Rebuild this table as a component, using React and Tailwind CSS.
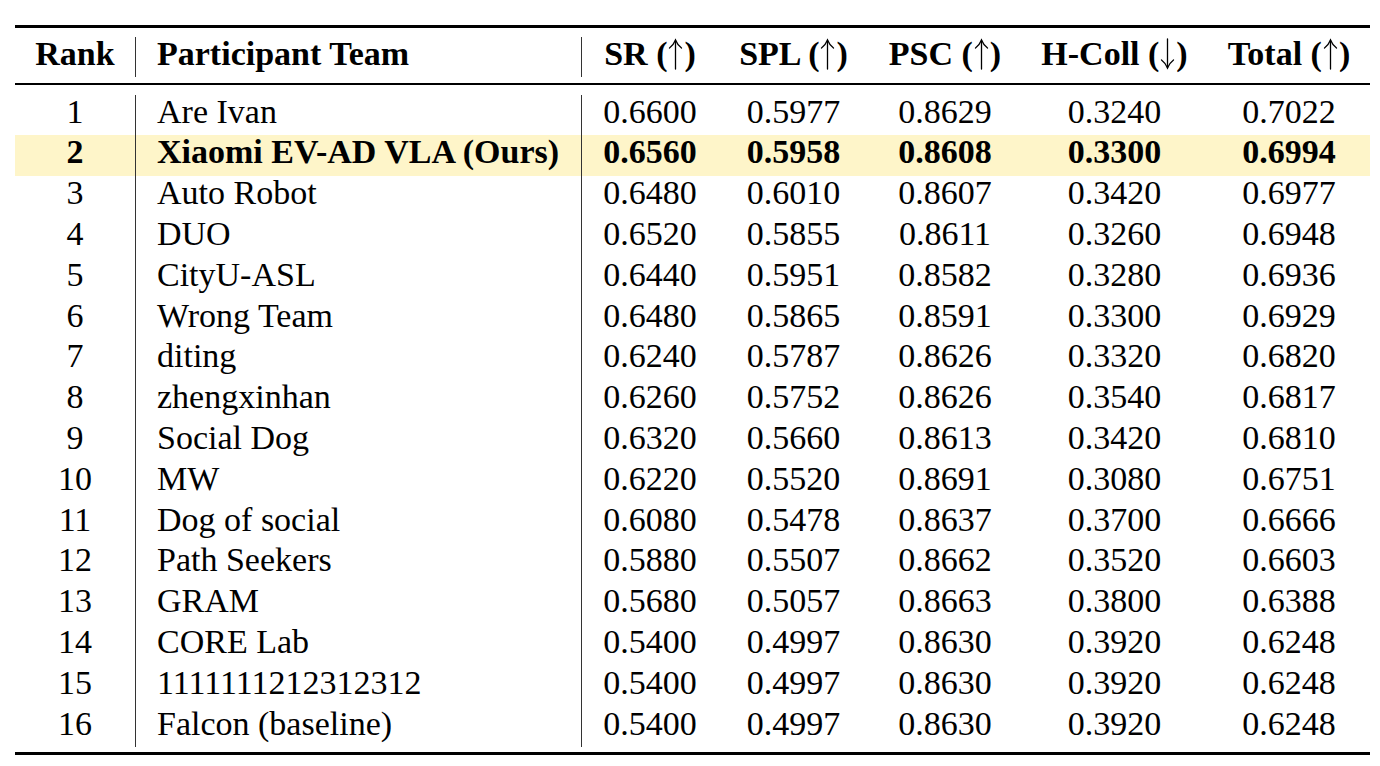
import React from 'react'

const ROWS = [
  ['1', 'Are Ivan', '0.6600', '0.5977', '0.8629', '0.3240', '0.7022'],
  ['2', 'Xiaomi EV-AD VLA (Ours)', '0.6560', '0.5958', '0.8608', '0.3300', '0.6994'],
  ['3', 'Auto Robot', '0.6480', '0.6010', '0.8607', '0.3420', '0.6977'],
  ['4', 'DUO', '0.6520', '0.5855', '0.8611', '0.3260', '0.6948'],
  ['5', 'CityU-ASL', '0.6440', '0.5951', '0.8582', '0.3280', '0.6936'],
  ['6', 'Wrong Team', '0.6480', '0.5865', '0.8591', '0.3300', '0.6929'],
  ['7', 'diting', '0.6240', '0.5787', '0.8626', '0.3320', '0.6820'],
  ['8', 'zhengxinhan', '0.6260', '0.5752', '0.8626', '0.3540', '0.6817'],
  ['9', 'Social Dog', '0.6320', '0.5660', '0.8613', '0.3420', '0.6810'],
  ['10', 'MW', '0.6220', '0.5520', '0.8691', '0.3080', '0.6751'],
  ['11', 'Dog of social', '0.6080', '0.5478', '0.8637', '0.3700', '0.6666'],
  ['12', 'Path Seekers', '0.5880', '0.5507', '0.8662', '0.3520', '0.6603'],
  ['13', 'GRAM', '0.5680', '0.5057', '0.8663', '0.3800', '0.6388'],
  ['14', 'CORE Lab', '0.5400', '0.4997', '0.8630', '0.3920', '0.6248'],
  ['15', '1111111212312312', '0.5400', '0.4997', '0.8630', '0.3920', '0.6248'],
  ['16', 'Falcon (baseline)', '0.5400', '0.4997', '0.8630', '0.3920', '0.6248'],
]

const METRICS = [
  { label: 'SR', up: true },
  { label: 'SPL', up: true },
  { label: 'PSC', up: true },
  { label: 'H-Coll', up: false },
  { label: 'Total', up: true },
]

const COLS = 'grid grid-cols-[121px_446px_136px_151px_152px_187px_162px]'

// math-style arrow, thin stroke, as in the LaTeX \uparrow / \downarrow
function Arrow({ up }) {
  return (
    <svg
      width="17"
      height="32"
      viewBox="0 0 17 32"
      className="inline-block align-[-5px]"
      fill="none"
      stroke="black"
      strokeWidth="1.3"
      strokeLinecap="round"
    >
      {up ? (
        <>
          <path d="M8.5 2 V31" />
          <path d="M2.5 10 Q6.5 7 8.5 2 Q10.5 7 14.5 10" />
        </>
      ) : (
        <>
          <path d="M8.5 1 V30" />
          <path d="M2.5 22 Q6.5 25 8.5 30 Q10.5 25 14.5 22" />
        </>
      )}
    </svg>
  )
}

export default function App() {
  return (
    <div
      className="w-[1380px] h-[766px] bg-white text-black pt-[25px] pl-[15px]"
      style={{ fontFamily: '"Liberation Serif", "Times New Roman", serif' }}
    >
      <div className="w-[1355px] text-[34px]">
        {/* top rule */}
        <div className="h-[2.5px] bg-black" />

        {/* header */}
        <div className={`${COLS} mt-[9px] h-[40.8px] leading-[34.2px] font-bold`}>
          <div className="text-center border-r-[1.3px] border-[#333]">Rank</div>
          <div className="pl-[21px] border-r-[1.3px] border-[#333]">Participant Team</div>
          {METRICS.map((m) => (
            <div key={m.label} className="text-center whitespace-nowrap">
              {m.label} (<Arrow up={m.up} />)
            </div>
          ))}
        </div>

        {/* mid rule */}
        <div className="mt-[6px] h-[1.4px] bg-black" />

        {/* body */}
        <div className="mt-[10px]">
          {ROWS.map((r) => {
            const ours = r[0] === '2'
            return (
              <div
                key={r[0]}
                className={`${COLS} h-[40.8px] leading-[34.2px] ${ours ? 'bg-[#fef5c9] font-bold' : ''}`}
              >
                <div className="text-center border-r-[1.3px] border-[#333]">{r[0]}</div>
                <div className="pl-[21px] whitespace-nowrap border-r-[1.3px] border-[#333]">{r[1]}</div>
                {r.slice(2).map((v, i) => (
                  <div key={i} className="text-center">{v}</div>
                ))}
              </div>
            )
          })}
        </div>

        {/* bottom rule */}
        <div className="mt-[4.7px] h-[2.5px] bg-black" />
      </div>
    </div>
  )
}
